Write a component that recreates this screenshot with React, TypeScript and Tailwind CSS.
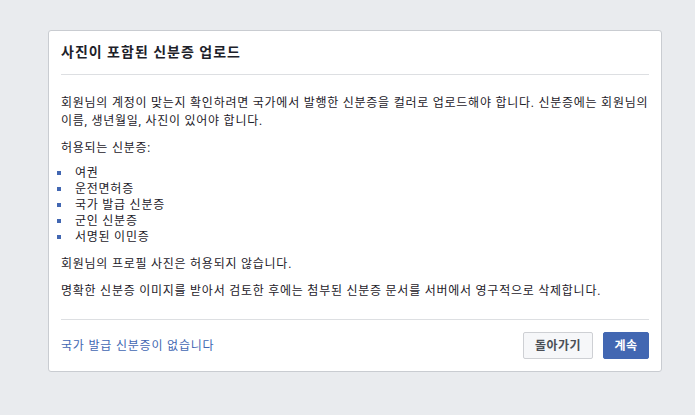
export default function App() {
  const ids = ['여권', '운전면허증', '국가 발급 신분증', '군인 신분증', '서명된 이민증'];

  return (
    <div
      className="min-h-[415px] w-full bg-[#e9ebee] pt-[30px] pl-[48px]"
      style={{ fontFamily: 'Roboto, "Noto Sans CJK KR", sans-serif' }}
    >
      <div className="w-[614px] rounded-[3px] border border-[#c9ccd1] bg-white text-[#1d2129] break-keep">
        <div className="mx-3 border-b border-[#dddfe2] py-3">
          <h1 className="text-[14px] font-bold leading-[19px] tracking-[1px]">사진이 포함된 신분증 업로드</h1>
        </div>

        <div className="px-3 pt-[19px] pb-[10px] text-[12px] leading-[18px] tracking-[0.75px]">
          <p className="mb-[9px]">
            회원님의 계정이 맞는지 확인하려면 국가에서 발행한 신분증을 컬러로 업로드해야 합니다. 신분증에는 회원님의
            이름, 생년월일, 사진이 있어야 합니다.
          </p>
          <p>허용되는 신분증:</p>
          <ul className="mt-[8px] mb-[10px]">
            {ids.map((id) => (
              <li key={id} className="flex items-center leading-[16px]">
                <span className="ml-[-4px] mr-[14px] h-[4px] w-[4px] bg-[#4267b2]" />
                {id}
              </li>
            ))}
          </ul>
          <p className="mb-[9px]">회원님의 프로필 사진은 허용되지 않습니다.</p>
          <p className="mb-[9px]">명확한 신분증 이미지를 받아서 검토한 후에는 첨부된 신분증 문서를 서버에서 영구적으로 삭제합니다.</p>
        </div>

        <div className="mx-3 flex items-center border-t border-[#dddfe2] pt-[12px] pb-[12px]">
          <a href="#" className="text-[12px] tracking-[0.8px] text-[#4267b2]">
            국가 발급 신분증이 없습니다
          </a>
          <div className="ml-auto flex gap-[10px]">
            <button className="h-[27px] w-[70px] rounded-[2px] border border-[#ced0d4] bg-[#f6f7f9] text-[12px] font-bold tracking-[0.5px] text-[#4b4f56]">
              돌아가기
            </button>
            <button className="h-[27px] w-[46px] rounded-[2px] border border-[#4267b2] bg-[#4267b2] text-[12px] font-bold tracking-[0.5px] text-white">
              계속
            </button>
          </div>
        </div>
      </div>
    </div>
  );
}
